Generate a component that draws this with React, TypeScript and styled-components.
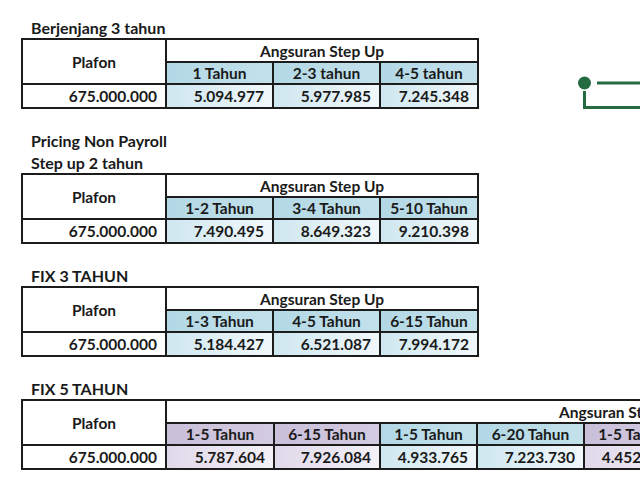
import React from 'react';
import styled, { createGlobalStyle } from 'styled-components';

const GlobalStyle = createGlobalStyle`
  html, body { margin: 0; padding: 0; background: #ffffff; overflow: hidden; }
  body { font-family: Lato, "Open Sans", "Liberation Sans", sans-serif; color: #1a1a1a; }
`;

const Page = styled.div`
  position: relative;
  width: 640px;
  height: 480px;
  overflow: hidden;
  box-sizing: border-box;
  padding: 18px 0 0 21px;
  display: flex;
  flex-direction: column;
  gap: 22px;
`;

const Section = styled.section`
  display: flex;
  flex-direction: column;
`;

const Titles = styled.div`
  display: flex;
  flex-direction: column;
  gap: 2px;
  padding-left: 10px;
`;

const Title = styled.div`
  font-weight: 700;
  font-size: 16px;
  line-height: 20px;
  white-space: nowrap;
`;

const Grid = styled.div<{ $cols: string }>`
  display: grid;
  grid-template-columns: ${(p) => p.$cols};
  grid-template-rows: 23px 22px 24px;
  width: max-content;
  border-top: 2px solid #1c1c1c;
  border-left: 2px solid #1c1c1c;
  font-weight: 700;
  font-size: 15.5px;
  line-height: 18px;
`;

type Tone = 'white' | 'blueHead' | 'blueData' | 'purpleHead' | 'purpleData';

const backgrounds: Record<Tone, string> = {
  white: '#ffffff',
  blueHead: 'linear-gradient(to right, #b3d8e5, #c2e1eb)',
  blueData: 'linear-gradient(to right, #cfe7f0, #f1f8fb)',
  purpleHead: 'linear-gradient(to right, #c9bfd9, #d3cbe1)',
  purpleData: 'linear-gradient(to right, #e0d9ea, #f3f0f7)',
};

const Cell = styled.div<{ $tone?: Tone; $align?: 'center' | 'right' }>`
  box-sizing: border-box;
  border-right: 2px solid #1c1c1c;
  border-bottom: 2px solid #1c1c1c;
  display: flex;
  align-items: center;
  justify-content: ${(p) => (p.$align === 'right' ? 'flex-end' : 'center')};
  padding: 0 8px;
  white-space: nowrap;
  overflow: hidden;
  background: ${(p) => backgrounds[p.$tone ?? 'white']};
`;

const PlafonHead = styled(Cell)`
  grid-row: 1 / span 2;
`;

const SpanHead = styled(Cell)`
  grid-column: 2 / -1;
`;

const Deco = styled.svg`
  position: absolute;
  left: 576px;
  top: 74px;
`;

type Col = { head: string; value: string; tone: 'blue' | 'purple' };

type TableData = {
  titles: string[];
  cols: string;
  columns: Col[];
};

const tables: TableData[] = [
  {
    titles: ['Berjenjang 3 tahun'],
    cols: '144px 107px 107px 98px',
    columns: [
      { head: '1 Tahun', value: '5.094.977', tone: 'blue' },
      { head: '2-3 tahun', value: '5.977.985', tone: 'blue' },
      { head: '4-5 tahun', value: '7.245.348', tone: 'blue' },
    ],
  },
  {
    titles: ['Pricing Non Payroll', 'Step up 2 tahun'],
    cols: '144px 107px 107px 98px',
    columns: [
      { head: '1-2 Tahun', value: '7.490.495', tone: 'blue' },
      { head: '3-4 Tahun', value: '8.649.323', tone: 'blue' },
      { head: '5-10 Tahun', value: '9.210.398', tone: 'blue' },
    ],
  },
  {
    titles: ['FIX 3 TAHUN'],
    cols: '144px 107px 107px 98px',
    columns: [
      { head: '1-3 Tahun', value: '5.184.427', tone: 'blue' },
      { head: '4-5 Tahun', value: '6.521.087', tone: 'blue' },
      { head: '6-15 Tahun', value: '7.994.172', tone: 'blue' },
    ],
  },
  {
    titles: ['FIX 5 TAHUN'],
    cols: '144px 108px 106px 97px 107px 97px 395px',
    columns: [
      { head: '1-5 Tahun', value: '5.787.604', tone: 'purple' },
      { head: '6-15 Tahun', value: '7.926.084', tone: 'purple' },
      { head: '1-5 Tahun', value: '4.933.765', tone: 'blue' },
      { head: '6-20 Tahun', value: '7.223.730', tone: 'blue' },
      { head: '1-5 Tahun', value: '4.452.618', tone: 'purple' },
      { head: '6-20 Tahun', value: '6.918.240', tone: 'purple' },
    ],
  },
];

function PriceTable({ data }: { data: TableData }) {
  return (
    <Section>
      <Titles>
        {data.titles.map((t) => (
          <Title key={t}>{t}</Title>
        ))}
      </Titles>
      <Grid $cols={data.cols}>
        <PlafonHead>Plafon</PlafonHead>
        <SpanHead>Angsuran Step Up</SpanHead>
        {data.columns.map((c, i) => (
          <Cell key={'h' + i} $tone={c.tone === 'blue' ? 'blueHead' : 'purpleHead'}>
            {c.head}
          </Cell>
        ))}
        <Cell $align="right">675.000.000</Cell>
        {data.columns.map((c, i) => (
          <Cell
            key={'v' + i}
            $align="right"
            $tone={c.tone === 'blue' ? 'blueData' : 'purpleData'}
          >
            {c.value}
          </Cell>
        ))}
      </Grid>
    </Section>
  );
}

export default function App() {
  return (
    <>
      <GlobalStyle />
      <Page>
        {tables.map((t) => (
          <PriceTable key={t.titles[0]} data={t} />
        ))}
        <Deco width="64" height="40" viewBox="0 0 64 40">
          <circle cx="8.5" cy="9" r="6.5" fill="#246b42" />
          <line x1="21" y1="9" x2="64" y2="9" stroke="#246b42" strokeWidth="3" />
          <path d="M8.5 17 V33.5 H64" fill="none" stroke="#246b42" strokeWidth="3" />
        </Deco>
      </Page>
    </>
  );
}
